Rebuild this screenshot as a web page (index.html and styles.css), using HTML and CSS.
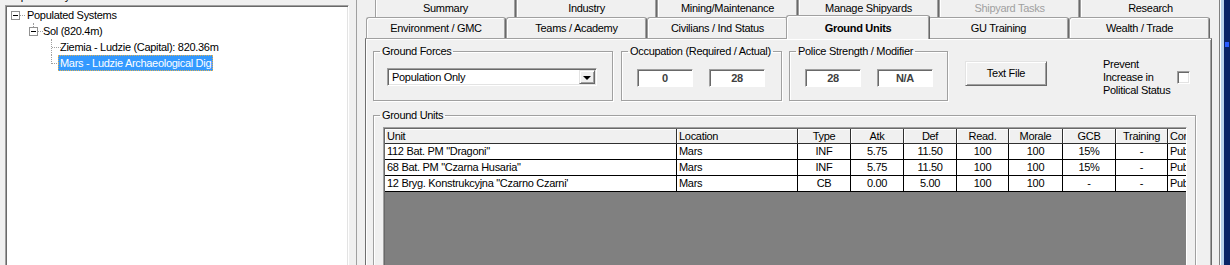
FILE: index.html
```html
<!DOCTYPE html>
<html lang="pl">

<head>
    <meta charset="UTF-8">
    <title>Ground Units</title>
    <link rel="stylesheet" href="styles.css">
</head>

<body>
<div class="win">
    <div class="left">
        <div class="cut"><span>Populated Systems</span></div>
        <div class="tree">
            <div class="node"><span class="col"><i class="box"></i></span><span class="lbl l0">Populated Systems</span></div>
            <div class="node"><span class="col"></span><span class="col up"><i class="box"></i></span><span class="lbl l1">Sol (820.4m)</span></div>
            <div class="node"><span class="col"></span><span class="col"></span><span class="col tee"></span><span class="lbl l2">Ziemia - Ludzie (Capital): 820.36m</span></div>
            <div class="node"><span class="col"></span><span class="col"></span><span class="col ell"></span><span class="lbl l2 sel">Mars - Ludzie Archaeological Dig</span></div>
        </div>
    </div>
    <div class="split"></div>

    <div class="tabctl">
        <div class="tabrow back">
            <div class="tab">Summary</div>
            <div class="tab">Industry</div>
            <div class="tab">Mining/Maintenance</div>
            <div class="tab">Manage Shipyards</div>
            <div class="tab off">Shipyard Tasks</div>
            <div class="tab">Research</div>
        </div>
        <div class="tabrow front">
            <div class="tab">Environment / GMC</div>
            <div class="tab">Teams / Academy</div>
            <div class="tab">Civilians / Ind Status</div>
            <div class="tab on">Ground Units</div>
            <div class="tab">GU Training</div>
            <div class="tab">Wealth / Trade</div>
        </div>

        <div class="page">
            <div class="toprow">
                <fieldset class="grp gf">
                    <legend>Ground Forces</legend>
                    <div class="combo"><span>Population Only</span><span class="drop"><i></i></span></div>
                </fieldset>
                <fieldset class="grp occ">
                    <legend>Occupation (Required / Actual)</legend>
                    <div class="pair"><div class="ro">0</div><div class="ro">28</div></div>
                </fieldset>
                <fieldset class="grp pol">
                    <legend>Police Strength / Modifier</legend>
                    <div class="pair"><div class="ro">28</div><div class="ro">N/A</div></div>
                </fieldset>
                <div class="btn">Text File</div>
                <div class="prevent">
                    <span class="ptxt">Prevent<br>Increase in<br>Political Status</span>
                    <span class="chk"></span>
                </div>
            </div>

            <fieldset class="grp gu">
                <legend>Ground Units</legend>
                <div class="list">
                    <div class="grid">
                        <div class="hd lt">Unit</div><div class="hd lt">Location</div><div class="hd">Type</div><div class="hd">Atk</div><div class="hd">Def</div><div class="hd">Read.</div><div class="hd">Morale</div><div class="hd">GCB</div><div class="hd">Training</div><div class="hd lt">Condition</div>

                        <div class="cl lt">112 Bat. PM "Dragoni"</div><div class="cl lt">Mars</div><div class="cl">INF</div><div class="cl">5.75</div><div class="cl">11.50</div><div class="cl">100</div><div class="cl">100</div><div class="cl">15%</div><div class="cl">-</div><div class="cl lt">Public</div>

                        <div class="cl lt">68 Bat. PM "Czarna Husaria"</div><div class="cl lt">Mars</div><div class="cl">INF</div><div class="cl">5.75</div><div class="cl">11.50</div><div class="cl">100</div><div class="cl">100</div><div class="cl">15%</div><div class="cl">-</div><div class="cl lt">Public</div>

                        <div class="cl lt">12 Bryg. Konstrukcyjna "Czarno Czarni'</div><div class="cl lt">Mars</div><div class="cl">CB</div><div class="cl">0.00</div><div class="cl">5.00</div><div class="cl">100</div><div class="cl">100</div><div class="cl">-</div><div class="cl">-</div><div class="cl lt">Public</div>
                    </div>
                </div>
            </fieldset>
        </div>
    </div>

    <div class="edge"><span class="e1"></span><span class="e2"></span><span class="e3"></span><span class="e4"><i></i></span></div>
</div>
</body>

</html>
```

FILE: styles.css
```css
body {
    margin: 0;
    width: 1230px;
    height: 265px;
    overflow: hidden;
    background: #f0f0f0;
    color: #000;
    font-family: "Liberation Sans", Arial, sans-serif;
    font-size: 11px;
    letter-spacing: -0.3px;
}
.win {
    display: flex;
    height: 265px;
}

/* left tree */
.left {
    width: 351px;
    padding-left: 5px;
    flex: none;
}
.cut {
    height: 5px;
    overflow: hidden;
    line-height: 13px;
}
.cut span {
    display: block;
    margin-top: -10px;
    padding-left: 3px;
}
.tree {
    box-sizing: border-box;
    width: 344px;
    height: 262px;
    background: #fff;
    border: 1px solid;
    border-color: #a0a0a0 #fff #fff #a0a0a0;
    box-shadow: inset 1px 1px 0 #696969, inset -1px -1px 0 #e3e3e3;
    padding: 1px 0 0 1px;
}
.node {
    display: flex;
    height: 16px;
    align-items: center;
    white-space: nowrap;
}
.col {
    width: 18px;
    height: 16px;
    flex: none;
    position: relative;
}
.box {
    position: absolute;
    left: 4px;
    top: 4px;
    width: 9px;
    height: 9px;
    box-sizing: border-box;
    border: 1px solid #919191;
    background: #fff;
    z-index: 1;
}
.box::before {
    content: "";
    position: absolute;
    left: 1px;
    top: 3px;
    width: 5px;
    height: 1px;
    background: #000;
}
.col:has(.box)::after,
.tee::after,
.ell::after {
    content: "";
    position: absolute;
    left: 9px;
    right: 0;
    top: 8px;
    border-top: 1px dotted #a0a0a0;
}
.up::before,
.tee::before,
.ell::before {
    content: "";
    position: absolute;
    left: 8px;
    top: 0;
    border-left: 1px dotted #a0a0a0;
}
.up::before { height: 4px; }
.tee::before { height: 16px; }
.ell::before { height: 9px; }
.lbl {
    padding: 0 2px;
    line-height: 16px;
    height: 16px;
}
.l1 { margin-left: -2px; }
.l2 { margin-left: -3px; }
.sel {
    background: #3399ff;
    color: #fff;
    outline: 1px dotted #e0b050;
    outline-offset: -1px;
}
.split {
    width: 1px;
    background: #a0a0a0;
    flex: none;
    margin-right: 8px;
}

/* tab control */
.tabctl {
    width: 847px;
    flex: none;
    display: flex;
    flex-direction: column;
}
.tabrow {
    display: flex;
    flex: none;
}
.back {
    height: 17px;
    padding-left: 10px;
}
.front {
    height: 21px;
    padding-left: 1px;
}
.tab {
    box-sizing: border-box;
    flex: none;
    width: 141px;
    text-align: center;
    white-space: nowrap;
    background: #f0f0f0;
    border: 1px solid #a0a0a0;
    border-right-color: #696969;
    border-bottom: none;
    border-radius: 3px 3px 0 0;
    box-shadow: inset 1px 1px 0 #fff, inset -1px 0 0 #a0a0a0;
}
.back .tab {
    height: 20px;
    margin-top: -3px;
    line-height: 20px;
}
.front .tab {
    height: 21px;
    line-height: 20px;
}
.front .tab:nth-child(1),
.front .tab:nth-child(4) { width: 140px; }
.tab.off { color: #a0a0a0; }
.front .tab.on {
    position: relative;
    z-index: 1;
    width: 144px;
    height: 24px;
    margin: -2px -2px 0;
    line-height: 24px;
    font-weight: bold;
}
.page {
    box-sizing: border-box;
    flex: 1;
    border: 1px solid;
    border-color: #a0a0a0 #696969 #696969 #6f6f6f;
    box-shadow: inset 1px 1px 0 #fff, inset -1px 0 0 #a0a0a0;
    padding: 6px 0 0 7px;
}

/* group boxes */
.grp {
    box-sizing: border-box;
    margin: 0;
    padding: 0 0 0 6px;
    min-width: 0;
    border: 1px solid #a0a0a0;
    box-shadow: inset 1px 1px 0 #fff, 1px 1px 0 #fff;
}
.grp legend {
    padding: 0 2px;
    line-height: 13px;
    white-space: nowrap;
}
.toprow {
    display: flex;
    align-items: flex-start;
    height: 56px;
}
.gf {
    width: 240px;
    height: 56px;
    margin-right: 8px;
}
.occ {
    width: 161px;
    height: 56px;
    margin-right: 7px;
}
.pol {
    width: 159px;
    height: 56px;
    margin-right: 17px;
}
.combo {
    box-sizing: border-box;
    display: flex;
    width: 210px;
    height: 18px;
    margin: 10px 0 0 7px;
    background: #fff;
    border: 1px solid;
    border-color: #a0a0a0 #fff #fff #a0a0a0;
    box-shadow: inset 1px 1px 0 #696969, inset -1px -1px 0 #e3e3e3;
    padding: 1px;
}
.combo span:first-child {
    flex: 1;
    padding-left: 3px;
    line-height: 14px;
}
.drop {
    box-sizing: border-box;
    width: 16px;
    height: 14px;
    background: #f0f0f0;
    border: 1px solid;
    border-color: #e3e3e3 #696969 #696969 #e3e3e3;
    box-shadow: inset 1px 1px 0 #fff, inset -1px -1px 0 #a0a0a0;
    display: flex;
    align-items: center;
    justify-content: center;
}
.drop i {
    width: 0;
    height: 0;
    border-left: 4px solid transparent;
    border-right: 4px solid transparent;
    border-top: 4px solid #000;
    margin-top: 1px;
}
.pair {
    display: flex;
    gap: 16px;
    margin: 11px 0 0 9px;
}
.ro {
    box-sizing: border-box;
    width: 56px;
    height: 18px;
    background: #fff;
    border: 1px solid;
    border-color: #a0a0a0 #fff #fff #a0a0a0;
    box-shadow: inset 1px 1px 0 #696969;
    text-align: center;
    line-height: 16px;
    font-weight: bold;
    color: #404040;
}
.btn {
    box-sizing: border-box;
    width: 82px;
    height: 25px;
    margin-top: 16px;
    margin-right: 56px;
    border: 1px solid;
    border-color: #e3e3e3 #696969 #696969 #e3e3e3;
    box-shadow: inset 1px 1px 0 #fff, inset -1px -1px 0 #a0a0a0;
    text-align: center;
    line-height: 23px;
}
.prevent {
    display: flex;
    align-items: center;
    margin-top: 13px;
}
.ptxt {
    width: 74px;
    line-height: 13px;
    white-space: nowrap;
}
.chk {
    box-sizing: border-box;
    width: 13px;
    height: 13px;
    background: #fff;
    border: 1px solid;
    border-color: #a0a0a0 #fff #fff #a0a0a0;
    box-shadow: inset 1px 1px 0 #696969, inset -1px -1px 0 #e3e3e3;
}

/* ground units list */
.gu {
    width: 823px;
    height: 200px;
    margin-top: 8px;
}
.list {
    box-sizing: border-box;
    width: 804px;
    height: 160px;
    margin: 5px 0 0 3px;
    background: #808080;
    border: 1px solid;
    border-color: #a0a0a0 #fff #fff #a0a0a0;
    box-shadow: inset 1px 1px 0 #696969;
    padding: 1px 0 0 1px;
    overflow: hidden;
}
.grid {
    display: grid;
    grid-template-columns: 292px 121px 53px 53px 53px 52px 54px 53px 52px 60px;
    width: 843px;
}
.hd, .cl {
    box-sizing: border-box;
    white-space: nowrap;
    overflow: hidden;
    text-align: center;
}
.hd {
    height: 15px;
    line-height: 14px;
    background: #f0f0f0;
    border-right: 1px solid #303030;
    border-bottom: 1px solid #303030;
    box-shadow: inset 1px 1px 0 #fff;
}
.cl {
    height: 16px;
    line-height: 15px;
    background: #fff;
    border-right: 1px solid #000;
    border-bottom: 1px solid #000;
}
.lt {
    text-align: left;
    padding-left: 2px;
}

/* window edge */
.edge {
    display: flex;
    flex: 1;
}
.e1 { width: 7px; }
.e2 { width: 1px; background: #808080; }
.e3 { width: 4px; background: #b9d1ea; border-left: 1px solid #fff; box-sizing: border-box; }
.e4 {
    flex: 1;
    background: #0b2466;
    padding-top: 42px;
}
.e4 i {
    display: block;
    width: 4px;
    height: 5px;
    margin-left: 1px;
    background: #2a5cff;
}
```
